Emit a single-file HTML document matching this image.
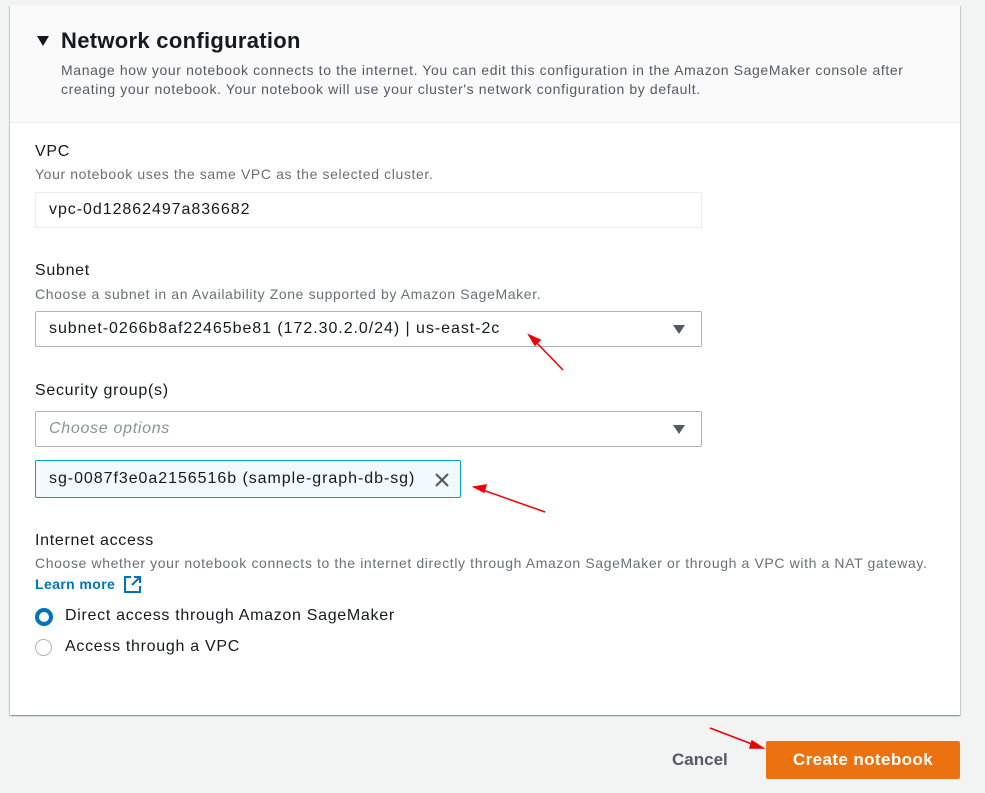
<!DOCTYPE html>
<html><head><style>
body{margin:0;width:985px;height:793px;background:#f2f3f3;font-family:"Liberation Sans",sans-serif;position:relative;overflow:hidden;color:#16191f}
.card{position:absolute;left:10px;top:5px;width:950px;height:710px;background:#fff;box-shadow:0 1px 1px 0 rgba(0,28,36,.3),1px 1px 1px 0 rgba(0,28,36,.15),-1px 1px 1px 0 rgba(0,28,36,.15)}
.hdr{position:absolute;left:0;top:0;width:950px;height:117px;background:#fafafa;border-bottom:1px solid #eaeded}
.a{position:absolute;white-space:nowrap}
.lbl{font-size:16px;color:#16191f;letter-spacing:0.7px}
.desc{font-size:14px;color:#687078;letter-spacing:0.62px}
.inp{position:absolute;left:35px;width:667px;height:36px;border:1px solid #aab7b8;border-radius:2px;background:#fff;box-sizing:border-box;font-size:16px;line-height:34px;padding-left:13px;letter-spacing:0.95px}
.tri{position:absolute;right:16px;top:13px;width:0;height:0;border-left:6px solid transparent;border-right:6px solid transparent;border-top:9px solid #545b64}
</style></head><body>
<div class="card"><div class="hdr"></div></div>
<div class="a" style="left:37px;top:36px;width:0;height:0;border-left:6px solid transparent;border-right:6px solid transparent;border-top:10px solid #16191f"></div>
<div class="a" style="left:61px;top:28px;font-size:22px;font-weight:bold;letter-spacing:0.3px">Network configuration</div>
<div class="a desc" style="left:61px;top:61px;line-height:19px;color:#545b64">Manage how your notebook connects to the internet. You can edit this configuration in the Amazon SageMaker console after<br>creating your notebook. Your notebook will use your cluster's network configuration by default.</div>
<div class="a lbl" style="left:35px;top:143px">VPC</div>
<div class="a desc" style="left:35px;top:166px">Your notebook uses the same VPC as the selected cluster.</div>
<div class="inp" style="top:192px;border-color:#eaeded">vpc-0d12862497a836682</div>
<div class="a lbl" style="left:35px;top:262px">Subnet</div>
<div class="a desc" style="left:35px;top:286px">Choose a subnet in an Availability Zone supported by Amazon SageMaker.</div>
<div class="inp" style="top:311px">subnet-0266b8af22465be81 (172.30.2.0/24) | us-east-2c<div class="tri"></div></div>
<div class="a lbl" style="left:35px;top:382px">Security group(s)</div>
<div class="inp" style="top:411px;font-style:italic;color:#879596;letter-spacing:0.7px">Choose options<div class="tri"></div></div>
<div class="a" style="left:35px;top:460px;width:426px;height:38px;box-sizing:border-box;border:1px solid #00a1c9;border-radius:2px;background:#f1faff;font-size:16px;line-height:36px;padding-left:13px;letter-spacing:0.95px">sg-0087f3e0a2156516b (sample-graph-db-sg)
<svg style="position:absolute;left:398px;top:11px" width="16" height="16"><path d="M2 2L14 14M14 2L2 14" stroke="#545b64" stroke-width="2.2"/></svg></div>
<div class="a lbl" style="left:35px;top:532px">Internet access</div>
<div class="a desc" style="left:35px;top:555px">Choose whether your notebook connects to the internet directly through Amazon SageMaker or through a VPC with a NAT gateway.</div>
<div class="a" style="left:35px;top:576px;font-size:14px;font-weight:bold;color:#0073bb;letter-spacing:0.4px">Learn more</div>
<svg class="a" style="left:123px;top:575px" width="20" height="19"><path d="M8 2H2V17H17V11" fill="none" stroke="#0073bb" stroke-width="2"/><path d="M11 2H17V8M17 2L9 10" fill="none" stroke="#0073bb" stroke-width="2"/></svg>
<div class="a" style="left:35px;top:608px;width:10px;height:10px;border:4px solid #0073bb;border-radius:50%;background:#fff"></div>
<div class="a lbl" style="left:65px;top:607px">Direct access through Amazon SageMaker</div>
<div class="a" style="left:35px;top:639px;width:15px;height:15px;border:1.5px solid #aab7b8;border-radius:50%;background:#fff"></div>
<div class="a lbl" style="left:65px;top:638px">Access through a VPC</div>
<div class="a" style="left:672px;top:750px;font-size:17px;font-weight:bold;color:#545b64">Cancel</div>
<div class="a" style="left:766px;top:741px;width:194px;height:38px;background:#ec7211;border-radius:2px;color:#fff;font-size:17px;font-weight:bold;text-align:center;line-height:38px;letter-spacing:0.4px">Create notebook</div>
<svg class="a" style="left:0;top:0" width="985" height="793">
<g stroke="#e00" stroke-width="1.5" fill="#e00">
<line x1="533" y1="339" x2="563" y2="370"/><path d="M529 335L540 340L535 345Z"/>
<line x1="480" y1="489" x2="545" y2="512"/><path d="M474 487L486 485L484 492Z"/>
<line x1="710" y1="728" x2="757" y2="746"/><path d="M763 748L752 741L750 748Z"/>
</g></svg>
</body></html>
